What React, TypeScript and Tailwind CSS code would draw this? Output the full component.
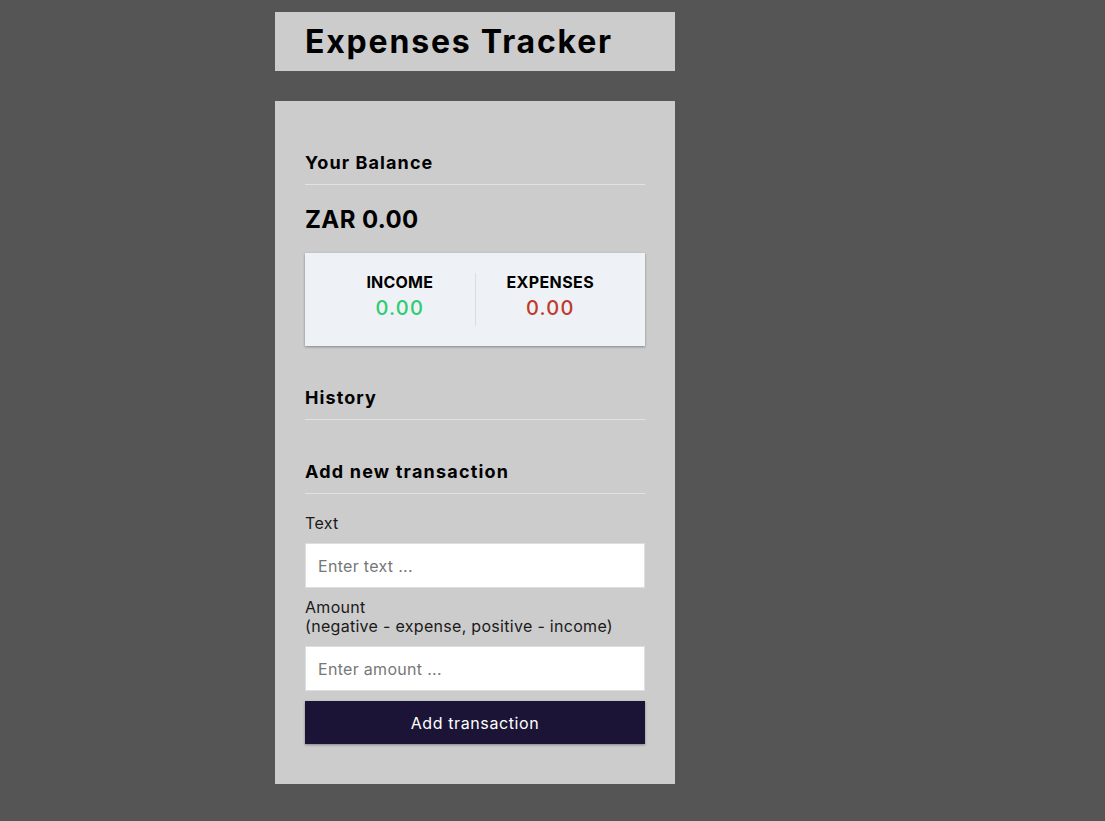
import React from "react";

export default function App() {
  return (
    <div
      className="min-h-screen bg-[#555555] pt-[12px] pb-[37px] text-black"
      style={{ fontFamily: "Inter, 'Noto Sans', sans-serif" }}
    >
      <div className="ml-[275px] w-[400px]">
        <header className="h-[59px] bg-[#cccccc] px-[30px] flex items-center">
          <h1 className="text-[32px] font-bold leading-none tracking-[1.8px]">Expenses Tracker</h1>
        </header>

        <main className="mt-[30px] bg-[#cccccc] px-[30px] pt-[30px] pb-[40px]">
          <h3 className="mt-[18px] text-[18px] font-bold leading-[27px] tracking-[1.1px] pb-2 border-b border-[#e2e2e2]">
            Your Balance
          </h3>
          <h2 className="mt-[17px] text-[24px] font-bold leading-[36px] tracking-[0.4px]">ZAR 0.00</h2>

          <div className="mt-[15px] bg-[#eef2f6] px-[20px] py-[20px] flex shadow-[0_1px_3px_rgba(0,0,0,0.12),0_1px_2px_rgba(0,0,0,0.24)]">
            <div className="flex-1 text-center border-r border-[#dddddd]">
              <h4 className="text-[16px] font-bold leading-[18px] uppercase tracking-[0.2px]">Income</h4>
              <p className="text-[20px] font-medium leading-[35px] text-[#2ecc71] tracking-[1.2px]">0.00</p>
            </div>
            <div className="flex-1 text-center">
              <h4 className="text-[16px] font-bold leading-[18px] uppercase tracking-[0.4px]">Expenses</h4>
              <p className="text-[20px] font-medium leading-[35px] text-[#c0392b] tracking-[1.2px]">0.00</p>
            </div>
          </div>

          <h3 className="mt-[38px] text-[18px] font-bold leading-[27px] tracking-[1.1px] pb-2 border-b border-[#e2e2e2]">
            History
          </h3>

          <h3 className="mt-[38px] text-[18px] font-bold leading-[27px] tracking-[1.2px] pb-2 border-b border-[#e2e2e2]">
            Add new transaction
          </h3>

          <form onSubmit={(e) => e.preventDefault()}>
            <div className="mt-[20px]">
              <label className="block text-[16px] leading-[19px] tracking-[0.3px] text-[#1a1a1a]">Text</label>
              <input
                type="text"
                placeholder="Enter text ..."
                className="mt-[10px] block w-full h-[45px] bg-white border border-[#dedede] px-[12px] text-[16px] tracking-[0.3px] placeholder:text-[#777] outline-none"
              />
            </div>
            <div className="mt-[10px]">
              <label className="block text-[16px] leading-[19px] tracking-[0.3px] text-[#1a1a1a]">
                Amount <br />
                (negative - expense, positive - income)
              </label>
              <input
                type="number"
                placeholder="Enter amount ..."
                className="mt-[10px] block w-full h-[45px] bg-white border border-[#dedede] px-[12px] text-[16px] tracking-[0.3px] placeholder:text-[#777] outline-none"
              />
            </div>
            <button
              type="submit"
              className="mt-[10px] block w-full h-[43px] bg-[#1b1436] text-white text-[16px] tracking-[0.6px] shadow-[0_1px_3px_rgba(0,0,0,0.12),0_1px_2px_rgba(0,0,0,0.24)]"
            >
              Add transaction
            </button>
          </form>
        </main>
      </div>
    </div>
  );
}
